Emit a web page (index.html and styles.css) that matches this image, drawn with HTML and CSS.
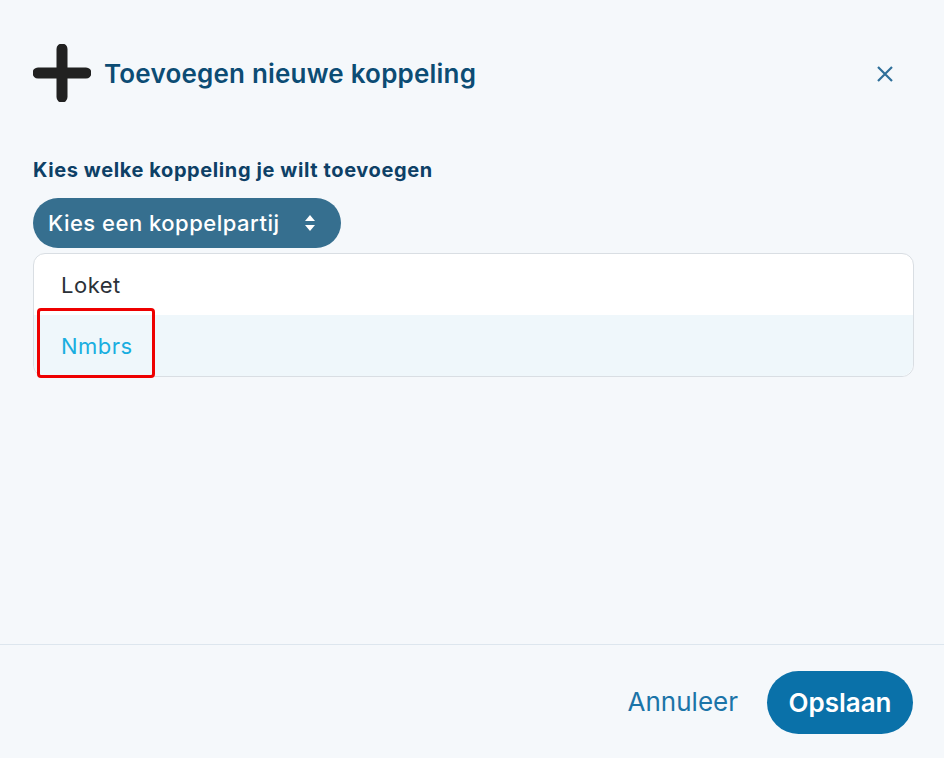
FILE: index.html
```html
<!DOCTYPE html>
<html lang="nl">
<head>
<meta charset="utf-8">
<link rel="stylesheet" href="styles.css">
</head>
<body>
<div class="modal">
  <div class="header">
    <svg class="plus" width="58" height="58" viewBox="0 0 58 58"><path d="M29 5 V53 M5 29 H53" stroke="#212121" stroke-width="11" stroke-linecap="round" fill="none"/></svg>
    <h1 class="title">Toevoegen nieuwe koppeling</h1>
    <svg class="close" width="18" height="18" viewBox="0 0 18 18"><path d="M2 2 L16 16 M16 2 L2 16" stroke="#2f6f9a" stroke-width="2.2" fill="none"/></svg>
  </div>
  <div class="body">
    <div class="label">Kies welke koppeling je wilt toevoegen</div>
    <div class="select">
      <span>Kies een koppelpartij</span>
      <svg class="arrows" width="12" height="18" viewBox="0 0 12 18"><path d="M6 1 L11 7 H1 Z M6 17 L11 11 H1 Z" fill="#fff"/></svg>
    </div>
    <div class="list">
      <div class="item">Loket</div>
      <div class="item active">Nmbrs</div>
      <div class="highlight"></div>
    </div>
  </div>
  <div class="footer">
    <span class="cancel">Annuleer</span>
    <span class="save">Opslaan</span>
  </div>
</div>
</body>
</html>
```
FILE: styles.css
```css
html, body { margin: 0; padding: 0; }
body {
  background: #f5f8fb;
  font-family: Inter, "Noto Sans", sans-serif;
  width: 944px;
  height: 758px;
  overflow: hidden;
}
.modal { display: flex; flex-direction: column; height: 758px; }
.header {
  display: flex;
  align-items: center;
  padding: 44px 50px 0 33px;
  height: 58px;
}
.plus { flex: none; }
.title {
  margin: 0 0 0 13px;
  font-size: 26px;
  font-weight: 600;
  color: #0c4c74;
  flex: 1;
  letter-spacing: 0.2px;
}
.close { flex: none; margin-top: 2px; }
.body { padding: 56px 30px 0 33px; flex: 1; }
.label {
  font-size: 20px;
  font-weight: 700;
  color: #0d4066;
  line-height: 24px;
  letter-spacing: 0.6px;
}
.select {
  display: inline-flex;
  align-items: center;
  margin-top: 16px;
  height: 50px;
  padding: 0 25px 0 15px;
  background: #366f8f;
  border-radius: 25px;
  color: #fff;
  font-size: 22px;
  font-weight: 500;
  letter-spacing: 0.5px;
  box-sizing: border-box;
  width: 308px;
}
.select span { flex: 1; }
.list {
  position: relative;
  margin-top: 5px;
  border: 1px solid #d9dee3;
  border-radius: 12px;
  background: #fff;
}
.item {
  height: 61px;
  display: flex;
  align-items: center;
  padding-left: 27px;
  font-size: 22px;
  letter-spacing: 0.5px;
  color: #2b3138;
}
.item:first-child { border-radius: 12px 12px 0 0; }
.item.active {
  background: #eff7fb;
  color: #19aee0;
  border-radius: 0 0 12px 12px;
}
.highlight {
  position: absolute;
  left: 3px;
  top: 54px;
  width: 112px;
  height: 64px;
  border: 3px solid #ee0000;
  border-radius: 4px;
}
.footer {
  border-top: 1px solid #dde6ee;
  height: 114px;
  display: flex;
  align-items: center;
  justify-content: flex-end;
  padding-right: 31px;
  box-sizing: border-box;
}
.cancel {
  font-size: 26px;
  color: #1b74a8;
  margin-right: 29px;
}
.save {
  background: #0a71a9;
  color: #fff;
  font-size: 26px;
  font-weight: 600;
  height: 63px;
  width: 146px;
  border-radius: 32px;
  display: flex;
  align-items: center;
  justify-content: center;
  margin-top: 2px;
}
```
